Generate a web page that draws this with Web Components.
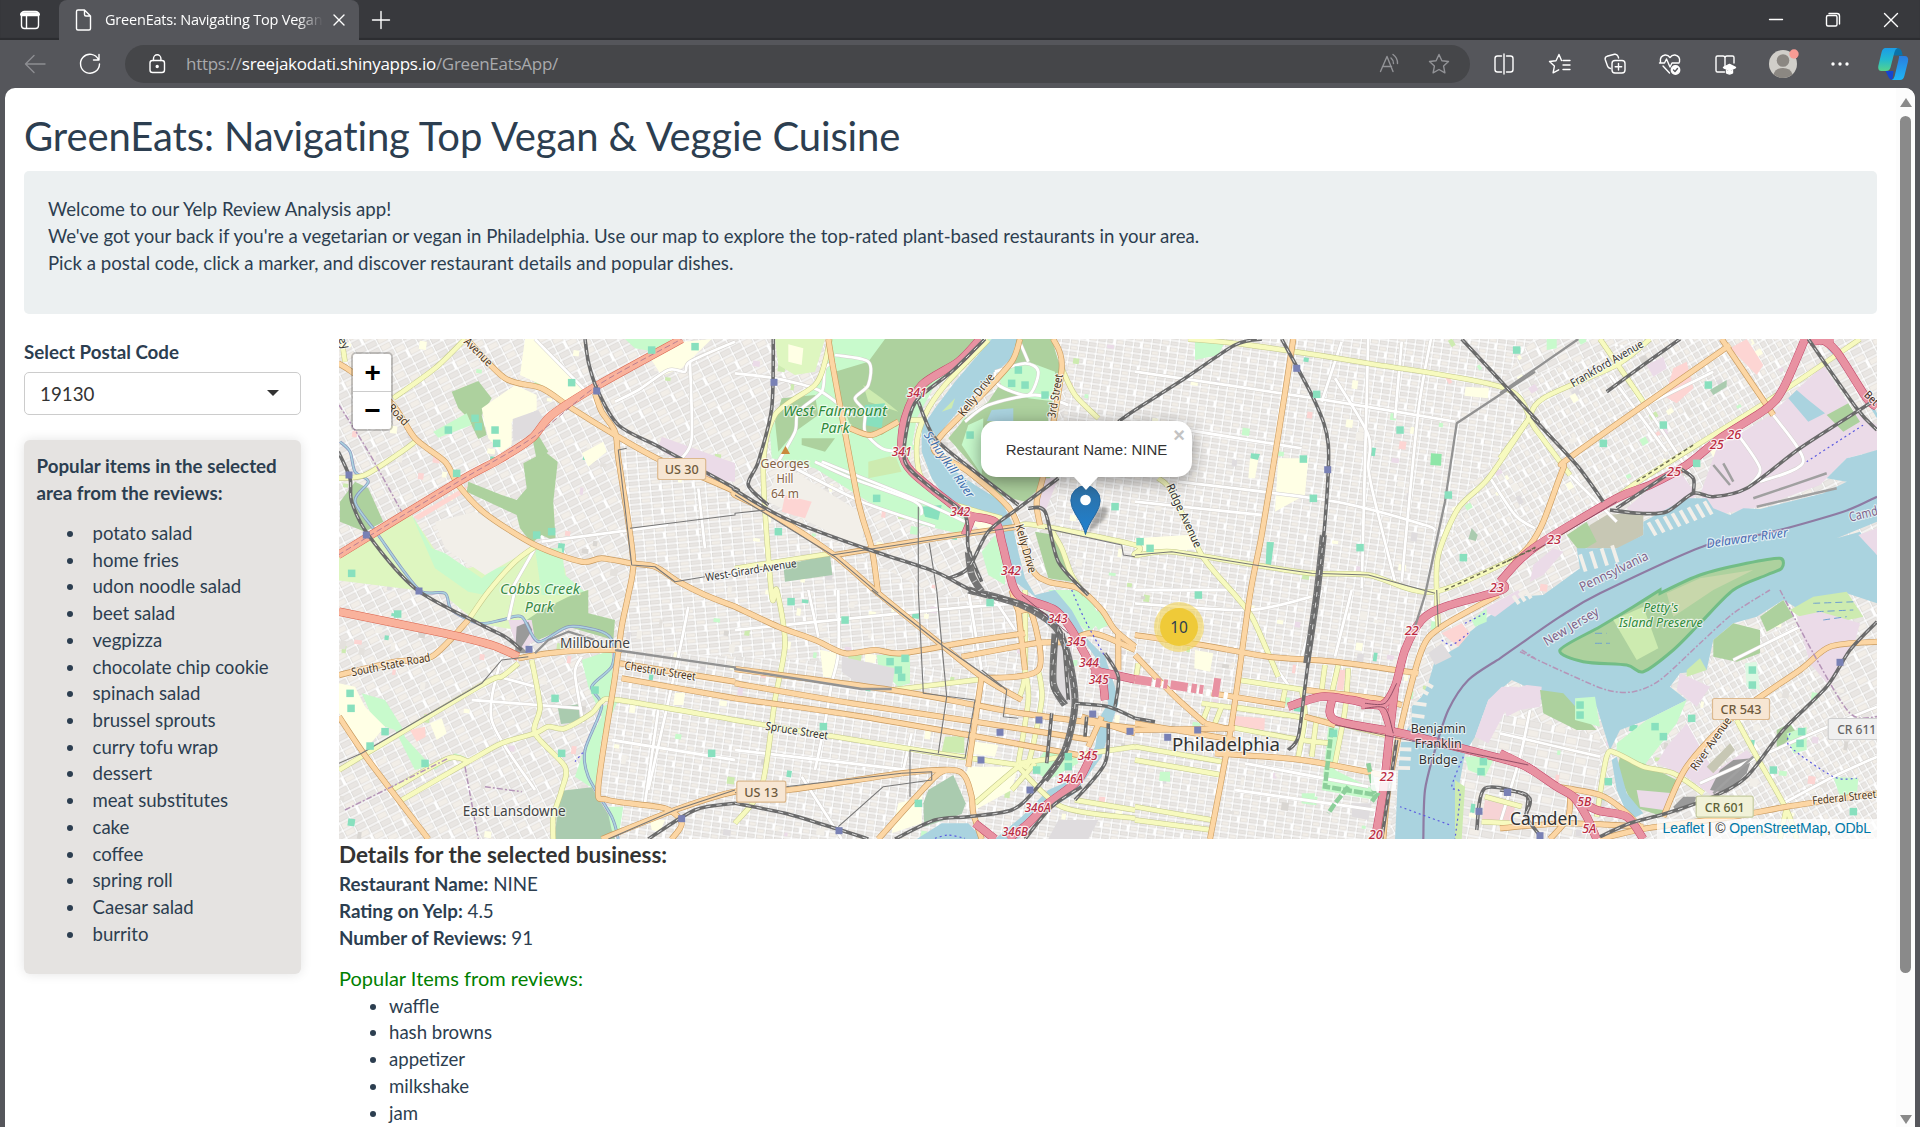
<!DOCTYPE html>
<html lang="en"><head><meta charset="utf-8"><title>GreenEats: Navigating Top Vegan &amp; Veggie Cuisine</title>
<style>
html,body{margin:0;height:1127px;overflow:hidden}
body{font:18.75px/26.79px Lato,"Noto Sans",sans-serif;color:#2c3e50;background:#55565b}
</style></head><body>
<browser-window>
  <greeneats-page></greeneats-page>
</browser-window>
<script>
const ICONS={
 workspace:'<rect x="5.5" y="5.5" width="17" height="17" rx="3"/><path d="M6 8.2h16" stroke-width="4"/><path d="M10.5 9v13"/>',
 file:'<path d="M7.500 5.500q0-1.500 1.500-1.500h6.500l6 6v12.500q0 1.500-1.500 1.500H9q-1.500 0-1.500-1.500zM15.500 4v4.500q0 1.500 1.500 1.500h4.500"/>',
 x:'<path d="M9 9l10 10M19 9L9 19"/>', plus:'<path d="M14 5.500v17M5.500 14h17"/>',
 min:'<path d="M7.500 13.500h13"/>',
 max:'<rect x="7.500" y="9.500" width="10.500" height="10.500" rx="1.500"/><path d="M10 7.500h8q2.500 0 2.500 2.500v8"/>',
 close:'<path d="M7.500 7.500l13 13M20.500 7.500l-13 13"/>',
 back:'<path d="M24 14H4.500M13 5.500L4.500 14l8.500 8.500" stroke="#8d8e92"/>',
 reload:'<path d="M22.500 9.500A9.500 9.500 0 1 0 23.500 14M23 4.500v5.500h-5.500"/>',
 lock:'<rect x="7" y="10.500" width="14.500" height="12" rx="2.500"/><path d="M10.500 10.500V8.500a3.700 3.700 0 0 1 7.400 0v2"/><circle cx="14.200" cy="16.500" r="1" fill="#fff"/>',
 read:'<g stroke="#929397"><path d="M5.500 21.500L12 6.500l6 15M7.500 16.500h9M16 8q2.500 2 2.500 5.500M18 4.500q4.800 3.500 4.500 9"/></g>',
 star:'<path stroke="#929397" d="M14 4.500l2.900 6.200 6.600.8-4.900 4.600 1.300 6.700-5.900-3.300-5.900 3.300 1.300-6.700-4.900-4.600 6.600-.8z"/>',
 split:'<path d="M11.500 6H7.500Q5 6 5 8.500v11Q5 22 7.500 22h4M16.500 6h4Q23 6 23 8.500v11q0 2.500-2.500 2.500h-4M14 4v20"/>',
 favs:'<path d="M15.500 10.500l-2.500-6-3 6.200-6.500.8 4.900 4.600-1.300 6.700 5.600-3M17 10.500h7M17 15h7M17 19.500h7"/>',
 coll:'<rect x="11" y="10.500" width="13" height="12.500" rx="3"/><path d="M17.500 13.500v6.500M14.200 16.800h6.500M9.500 18.500Q7 18 6.500 16L4.200 9.500Q3.700 7 6 6.300l7.500-2q2.500-.5 3.500 2l.6 1.700"/>',
 heart:'<path d="M4.500 12q-1-6 4.500-7 3-.3 5 2.500 2-2.800 5-2.500 5.500 1 4.500 7M3.500 13h5l2-4 3.500 8 2-4h7M7 16l6.500 7"/><circle cx="19.500" cy="20" r="4.200" fill="#fff"/><path d="M17.500 20l1.500 1.500 2.500-3" stroke="#55565b"/>',
 book:'<path d="M13.500 22H6.500Q5 22 5 20.500v-13Q5 6 6.500 6H12q2 0 2 2v10M14 8q0-2 2-2h5.500Q23 6 23 7.500V13"/><path d="M12.500 17.500l6-3 6 3-6 3z" fill="#fff"/><path d="M15.500 20.500v2.500q3 2 6 0v-2.500" fill="#fff"/>',
 avatar:'<g stroke="none"><circle cx="14" cy="14" r="14" fill="#d0cec9"/><circle cx="14" cy="10.500" r="6.300" fill="#8b8782"/><path d="M4.500 24.300q2-6.300 9.500-6.300t9.500 6.300A14 14 0 0 1 4.500 24.300" fill="#8b8782"/><circle cx="25" cy="4" r="4.700" fill="#f79b94"/></g>',
 dots:'<g fill="#fff" stroke="none"><circle cx="7" cy="14" r="1.700"/><circle cx="14" cy="14" r="1.700"/><circle cx="21" cy="14" r="1.700"/></g>',
 copilot:'<defs><linearGradient id="a" x1="0" y1="0" x2="0" y2="1"><stop stop-color="#1b9ce8"/><stop offset=".5" stop-color="#23b9cf"/><stop offset="1" stop-color="#55d38c"/></linearGradient><linearGradient id="b" x1="0" y1="0" x2="0" y2="1"><stop stop-color="#2a7de0"/><stop offset="1" stop-color="#1fb6f5"/></linearGradient></defs><g stroke="none"><path d="M13-2h5q3.500 0 4.500 3l1.300 4.500H15z" fill="#0b72a8"/><path d="M6.500 21h8l-1 9q-3.500-.5-4.500-4z" fill="#1546cf"/><path d="M6.500-2H18.500q-2 .5-3 4L11.500 17.500q-1 3.500-4.500 3.500H2.500q-4 0-3.200-5L2.500 2.500q1-4.500 4-4.500z" fill="url(#a)"/><path d="M20 6h5.500q4.500 0 3.500 5.500l-3.500 14q-1 4.500-4.500 4.500H12.500q2.300-.5 3.200-4L19.500 10q.7-3 .5-4z" fill="url(#b)"/></g>'
};
class UiIcon extends HTMLElement{constructor(){super();this.attachShadow({mode:'open'}).innerHTML=`<style>:host{display:block;width:28px;height:28px;flex:none}svg{display:block;overflow:visible}</style><svg width="28" height="28" viewBox="0 0 28 28" fill="none" stroke="#fff" stroke-width="1.4" stroke-linejoin="round" stroke-linecap="round">${ICONS[this.getAttribute('name')]}</svg>`}}
customElements.define('ui-icon',UiIcon);

class BrowserWindow extends HTMLElement{constructor(){super();this.attachShadow({mode:'open'}).innerHTML=`<style>
:host{display:flex;flex-direction:column;height:1127px;font-family:"Open Sans","Noto Sans",sans-serif;color:#fff}
.strip{height:40px;display:flex;align-items:center;background:#38393d;box-shadow:inset 0 -2px 1px #2c2d30}
.tab{margin-left:15px;width:300px;height:40px;background:#55565b;border-radius:8px 8px 0 0;display:flex;align-items:center}
.tab ui-icon:first-child{margin-left:10px}
.t{width:218px;overflow:hidden;white-space:nowrap;font-size:14.5px;letter-spacing:-.2px;margin-left:8px;-webkit-mask:linear-gradient(90deg,#000 88%,transparent)}
.bar{height:48px;display:flex;align-items:center;background:#55565b;box-sizing:border-box;padding:0 0 0 21px}
.addr{margin:0 0 0 21px;width:1345px;height:38px;border-radius:19px;background:#454649;display:flex;align-items:center;flex:none;box-sizing:border-box;padding:0 17px 0 18px}
.url{margin-left:15px;flex:1;font-size:17px;letter-spacing:-.27px;color:#a9aaad;white-space:nowrap}.url b{font-weight:400;color:#fff}
.ic{display:flex;gap:27px;margin-left:20px}
.view{flex:1;min-height:0;margin:0 5px;background:#fff;border-radius:10px 10px 0 0;display:flex;overflow:hidden}
.page{flex:1;min-width:0}
.sb{width:19px;background:#fcfcfc;display:flex;flex-direction:column;align-items:center;padding-top:10px;box-sizing:border-box}
.up,.dn{border:6px solid transparent;border-top:0;border-bottom:9px solid #8a8a8a}
.thumb{width:11px;height:857px;border-radius:6px;background:#8a8a8a;margin:9px 0 142px}
.dn{border-bottom:0;border-top:9px solid #8a8a8a}
</style>
<div class="strip"><ui-icon name="workspace" style="margin-left:16px"></ui-icon>
<div class="tab"><ui-icon name="file"></ui-icon><div class="t">GreenEats: Navigating Top Vegan</div><ui-icon name="x" style="margin-left:2px"></ui-icon></div>
<ui-icon name="plus" style="margin-left:8px"></ui-icon><ui-icon name="min" style="margin-left:auto"></ui-icon><ui-icon name="max" style="margin-left:29px"></ui-icon><ui-icon name="close" style="margin:0 15px 0 30px"></ui-icon></div>
<div class="bar"><ui-icon name="back"></ui-icon><ui-icon name="reload" style="margin-left:27px"></ui-icon>
<div class="addr"><ui-icon name="lock"></ui-icon><div class="url">https://<b>sreejakodati.shinyapps.io</b>/GreenEatsApp/</div><ui-icon name="read"></ui-icon><ui-icon name="star" style="margin-left:22px"></ui-icon></div>
<div class="ic"><ui-icon name="split"></ui-icon><ui-icon name="favs" style="margin-left:1px"></ui-icon><ui-icon name="coll"></ui-icon><ui-icon name="heart"></ui-icon><ui-icon name="book"></ui-icon><ui-icon name="avatar" style="margin-left:3px"></ui-icon><ui-icon name="dots" style="margin-left:2px"></ui-icon><ui-icon name="copilot" style="margin-left:-2px"></ui-icon></div></div>
<div class="view"><div class="page"><slot></slot></div><div class="sb"><div class="up"></div><div class="thumb"></div><div class="dn"></div></div></div>`}}
customElements.define('browser-window',BrowserWindow);

/* Map geometry: a letter picks the survey sheet, then x,y pairs in thirds of a pixel from its corner. */
const SHEET={A:[335,335],B:[735,335],C:[1135,335],D:[1500,335],E:[335,590],F:[735,590],G:[1135,590],H:[1500,590]};
function pts(s){let o=SHEET.A;const r=[];for(const t of s.trim().split(/\s+/)){if(SHEET[t])o=SHEET[t];else{const[x,y]=t.split(',').map(Number);r.push([o[0]+x/3,o[1]+y/3])}}return r}
const f1=n=>n.toFixed(1);
const poly=s=>'M'+pts(s).map(p=>f1(p[0])+' '+f1(p[1])).join('L');
function curve(s){const p=pts(s);let d='M'+f1(p[0][0])+' '+f1(p[0][1]);for(let i=0;i<p.length-1;i++){const a=p[i-1]||p[i],b=p[i],c=p[i+1],e=p[i+2]||c,k=7;d+=`C${f1(b[0]+(c[0]-a[0])/k)} ${f1(b[1]+(c[1]-a[1])/k)} ${f1(c[0]-(e[0]-b[0])/k)} ${f1(c[1]-(e[1]-b[1])/k)} ${f1(c[0])} ${f1(c[1])}`}return d}
const GRIDS=[
['g8','E 840,180 F 740,240 900,130 G 0,0 C 0,0 C 1200,0 D 0,150 C 900,780 G 860,200 760,747 F 0,747 E 780,747'],
['g8','C 0,0 980,0 1200,250 960,500 900,780 G 800,300 G 0,400 B 1060,780 960,560 1000,100 960,0'],
['g3','A 840,290 1200,460 B 600,780 F 860,40 900,130 740,240 E 840,180 A 895,690'],
['g30','C 1200,120 D 450,0 900,0 820,220 560,390 310,500 60,680 C 905,780 910,660 1170,270'],
['g30','H 640,200 890,100 1050,370 1131,400 1131,747 600,747 640,620 500,520'],
['g12','G 1060,360 H 300,440 290,747 G 960,747 980,500']
];
const AREAS=[
['#def6c0','A 0,650 130,590 230,540 330,690 400,700 600,640 690,700 700,780 E 760,0 600,130 430,100 320,10 0,-30'],
['#c8facc','A 230,540 290,640 330,655 440,730 480,700 530,690 450,780 400,770 300,700'],['#c8facc','A 600,640 680,640 690,720 760,780 620,780'],
['#f2efe9','A 420,530 540,590 600,635 520,680 450,720 330,640 300,560'],
['#add19e','A 15,500 60,440 100,460 145,560 90,590 15,560'],
['#add19e','A 395,470 400,440 500,480 545,495 575,460 565,385 630,350 668,380 655,500 662,620 620,600 590,625 555,580 545,540 480,510'],
['#add19e','A 350,170 430,138 470,190 440,240 455,300 430,312 400,250 370,220'],['#add19e','A 590,300 610,300 640,350 605,375'],
['#c8facc','A 295,290 395,235 410,270 310,308'],
['#ffffe5','A 440,220 540,150 605,180 605,225 530,260 530,330 500,352 460,310 450,270'],['#dfdcde','A 533,252 610,225 632,262 590,300 535,320'],
['#ffffe5','A 570,12 605,12 750,165 690,200 620,150 555,120'],['#ebdbe8','A 980,305 1200,385 1200,440 1100,430 970,340'],
['#ffd6d1','A 235,545 400,450 385,475 250,555'],['#ffffe5','A 740,355 805,320 815,350 760,395'],['#c8facc','A 870,12 1010,12 960,50 900,40'],['#ffffe5','A 940,60 1000,25 1130,12 1040,100 980,122'],
['#add19e','E 560,100 620,60 700,20 760,0 760,70 840,90 835,150 700,110 610,150'],['#ebdbe8','E 520,90 590,90 600,150 550,190'],['#9a9a9a','E 545,110 580,95 592,120 560,170 580,190 540,190'],
['#c8facc','E 740,210 830,180 835,300 800,350 850,330 800,440 780,600 E 720,560 750,470 800,380 760,290'],
['#aacbaf','E 668,352 730,343 736,395 678,402'],['#aacbaf','E 680,602 770,592 830,690 840,747 660,747 665,680'],
['#c8facc','E 80,310 150,330 200,410 240,540 180,420 120,400'],['#c8facc','E 190,420 300,540 360,490 390,500 240,540'],['#ffffe5','E 12,280 60,290 90,350 150,410 90,480 12,370'],['#ffffe5','E 285,400 320,385 335,430 305,450'],['#ffd6d1','E 225,420 270,410 272,440 245,455'],['#ffffe5','E 1020,308 1050,308 1045,345 1015,345'],['#ffffe5','E 945,690 990,690 975,725 950,720'],['#c8facc','E 815,650 865,650 850,747 830,720'],
['#def6c0','B 120,12 270,12 240,110 180,120 130,90'],['#ffffe5','B 160,28 205,40 200,90 160,80'],
['#c8facc','B 290,12 770,12 600,150 545,250 520,400 640,500 705,560 690,600 560,570 400,500 240,400 180,385 110,370 105,290 130,240 240,160'],
['#add19e','B 400,80 450,12 720,12 640,100 550,180 510,250 440,300 350,280 310,180 300,110'],['#add19e','B 140,190 240,180 250,240 180,290 130,350 120,260'],['#add19e','B 200,310 300,310 270,350 200,330'],['#cdebb0','B 385,150 440,190 490,230 400,200'],['#cdebb0','B 400,380 480,360 500,410 400,430'],
['#88e0be','B 390,210 450,205 440,280 390,270'],['#88e0be','B 560,515 620,510 610,555 570,545'],
['#f2efe9','B 130,380 390,540 380,640 100,500'],['#fdd5d3','B 150,480 230,500 210,550 140,530'],
['#add19e','B 840,12 950,12 980,110 940,240 945,430 870,500 790,480 720,400 640,310 690,250 760,200 840,80'],['#c8facc','B 790,110 880,80 960,110 965,200 880,190 800,160'],['#c8facc','B 700,270 745,250 740,420 680,330'],['#aad3df','B 770,225 835,220 835,258 755,258'],['#add19e','B 900,590 960,600 1010,740 940,730'],['#c8facc','B 740,650 780,600 810,680 810,750 760,720'],
['#ebdbe8','B 920,430 970,430 930,530 900,520'],['#aacbaf','B 145,690 285,660 292,720 150,740'],['#ffffe5','B 700,560 780,560 760,600'],
['#ffffe5','C 0,610 160,600 200,640 100,650 0,660'],['#ffffe5','C 430,370 520,370 510,480 420,530'],['#ffffe5','C 992,155 1062,160 1058,190 988,182'],['#c8facc','C 180,15 270,20 250,60 180,75'],['#aacbaf','C 1010,580 1028,600 1022,618 1000,612'],['#88e0be','C 348,355 375,357 365,385 345,383'],['#88e0be','C 395,620 417,622 408,690 392,688'],['#8fe6a8','C 888,355 920,357 918,392 886,390'],['#ffffe5','C 345,370 370,375 360,430 340,430'],
['#ffffe5','F 255,180 310,190 300,265 265,260'],['#cdebb0','F 340,195 380,195 375,230 340,230'],['#ffffe5','F 390,190 425,195 420,220 390,215'],['#c8facc','F 425,195 525,195 525,280 490,290 430,230'],['#dfdcde','F 320,200 480,235 470,295 380,290 320,245'],['#cdebb0','F 630,440 688,438 688,490 620,485'],
['#ffffe5','F 720,455 790,465 780,500 700,490'],['#ffffe5','F 700,530 850,530 830,600 720,660 690,560'],['#aacbaf','F 580,600 655,555 692,640 680,672 568,710 565,640'],['#ffffe5','F 490,640 560,620 560,700 470,730'],['#aad3df','F 545,747 620,700 700,700 745,747'],['#c8facc','F 930,480 1020,490 1030,520 940,570 890,540'],['#c8facc','F 1060,70 1110,60 1130,100 1090,120'],['#dfdcde','F 970,690 1090,690 1060,747 940,747'],['#dfdcde','F 950,120 1010,160 1020,340 960,330'],['#c8facc','F 940,0 1050,0 1100,90 1060,130 1020,90'],
['#c8facc','G 580,410 610,415 600,540 720,600 720,630 560,600'],['#fdd5d3','G 300,378 390,385 388,420 296,410'],['#ffffe5','G 180,180 235,190 225,245 178,235'],['#fdd5d3','G 612,240 632,240 625,300 605,300'],['#c8facc','G 75,545 105,545 105,575 72,572'],['#c8facc','G 500,610 540,610 535,645 500,640'],['#dfdcde','G 650,640 710,640 700,690 650,680'],
['#c7c7b4','D 320,540 430,530 430,600 360,640 230,640 270,570'],['#add19e','D 200,600 260,560 290,620 240,650'],['#ebdbe8','D 100,690 160,640 190,650 130,720 90,740'],
['#ebdbe8','D 380,520 470,440 540,410 590,480 520,540 400,535'],['#ebdbe8','D 650,340 810,240 970,90 1060,230 1131,270 1131,345 1040,370 960,450 780,515 650,540 600,480'],['#aad3df','D 865,190 890,165 925,195 975,235 925,260'],['#fdd5d3','D 690,40 740,12 790,90 770,120'],['#fdd5d3','D 520,100 560,80 580,160 530,205 495,185'],['#ebdbe8','D 440,90 490,65 500,100 460,125'],['#add19e','D 980,240 1045,205 1080,260 1030,290'],['#c8facc','D 140,12 170,12 170,40 140,45'],['#aacbaf','D 630,165 680,135 680,155 640,180'],['#aad3df','D 980,40 1000,60 1100,200 1131,250 1131,235 1110,190 1010,50']
];
const LATE=[
['#aad3df','B 770,12 845,12 830,70 740,150 660,240 610,300 600,340 620,380 720,450 800,500 830,560 850,650 870,730 900,780 F 960,0 1010,60 1060,150 1110,200 1140,290 1150,340 1130,400 1100,500 1020,610 940,660 850,747 780,747 860,680 940,600 1030,560 1080,470 1095,380 1120,340 1080,200 1030,130 980,90 900,20 B 840,740 800,600 760,540 640,500 590,430 560,350 560,280 600,220 660,140'],
['#cdebb0','B 620,230 660,190 650,220'],
['#aad3df','D 1131,345 1080,360 1040,370 980,430 1040,440 970,475 780,522 730,520 690,540 640,520 620,490 560,490 430,560 430,600 350,640 230,640 240,700 130,780 G 1150,20 1060,80 1000,130 970,170 900,210 880,280 860,320 830,350 830,400 800,440 790,540 780,747 960,747 970,600 990,490 1020,440 1060,330 1130,270 H 80,290 170,370 290,350 330,480 360,420 440,390 560,330 510,290 540,250 620,240 640,150 700,100 770,80 850,30 900,60 1040,10 1131,40 D 1131,660 1080,590 1010,610 1131,560'],
['#ebdbe8','D 1075,600 1131,580 1131,660'],
['#cdebb0','H 870,60 940,20 1040,5 1090,80 1000,100 900,80'],['#add19e','H 780,80 850,30 880,80 800,125'],['#ebdbe8','H 890,80 960,65 1080,100 1060,170 990,290 930,220'],['#add19e','H 640,150 700,100 780,120 780,190 710,215 640,200'],['#ebdbe8','H 540,250 630,290 590,350 530,300'],['#cdebb0','H 560,240 600,205 620,240 560,260'],
['#c8facc','H 350,460 440,390 560,330 530,400 430,530 350,490'],['#add19e','H 360,500 430,520 530,570 490,680 400,650 350,540'],['#ebdbe8','H 500,470 560,400 650,560 640,620 560,560 470,520'],['#ebdbe8','H 410,600 520,610 490,660 420,650'],['#ebdbe8','H 620,560 740,480 760,500 640,620'],['#aad3df','H 335,510 350,500 380,610 430,670 390,690 350,600'],
['#c7c7b4','H 620,530 690,460 705,480 640,550'],['#9a9a9a','H 630,600 660,540 700,510 755,505 740,550 680,610'],['#9a9a9a','H 520,650 550,620 590,620 580,645 530,670'],['#add19e','H 830,420 870,400 890,430 830,480'],
['#ebdbe8','H 0,310 20,380 60,360 120,350 125,290 80,285'],['#add19e','H 120,300 190,310 290,420 230,420 130,370'],['#c8facc','H 225,325 285,320 300,410 225,390'],
['#ebdbe8','G 1040,60 1150,0 1160,20 1080,80'],['#fdd5d3','G 920,130 980,100 1005,130 970,170'],['#c8facc','G 1010,90 1055,55 1055,95 1020,110'],['#ebdbe8','G 1020,440 1060,330 1100,290 1150,290 1060,460'],['#dfdcde','G 880,190 920,160 950,200 900,225'],['#f6d3d5','G 1050,630 1140,650 1130,695 1040,690'],['#c8facc','G 990,500 1080,500 1050,560 1000,540'],['#cdebb0','G 960,570 990,590 980,747 960,747'],
['#c8facc','H 860,430 920,410 920,480 880,490'],['#c8facc','H 1000,560 1075,565 1070,620 1020,620'],['#ddf8e3','H 735,220 770,215 780,300 740,290']
];
const ROADS={
ter:['A 750,165 600,12','A 1200,20 1065,80 1050,110 1000,105 910,165 840,200','A 620,620 1000,570','A 1065,80 1070,310 1040,370','A 520,780 600,640','B 300,80 270,100 260,170 190,230 180,290 130,380','B 0,115 120,130 250,165 350,240','B 300,60 400,80 400,150 360,190 390,230 390,290 440,340 490,350','B 240,380 350,430 540,500 560,540','B 180,400 380,500 600,575','B 260,380 560,500 690,560','B 690,260 760,210 900,180 1000,210','B 780,110 870,85 910,110 880,180 790,150 780,110','B 850,12 880,80','C 600,130 700,300 700,400 720,500 780,740','C 0,110 540,190 960,260','C 0,260 500,340','C 130,440 600,500 870,570 900,590','C 890,0 850,230 800,740','C 1060,420 1140,540 1200,580','D 430,200 580,430','D 190,400 350,560','E 500,200 470,390 600,600','E 490,260 600,290','E 410,330 740,355','E 740,200 720,250 745,400','F 310,0 310,190 290,280 270,400 240,540','F 200,560 320,747','G 300,0 0,0','G 0,40 340,60 530,20','G 400,200 470,300','H 0,430 300,500','H 90,360 60,500 0,700','H 1131,500 1000,560 850,640','H 600,580 890,450 1131,350','H 700,210 900,110','F 530,430 500,560','C 700,0 680,760','C 800,20 780,250','G 650,0 600,200','G 560,0 500,200','D 820,240 910,380 780,440','D 700,280 780,400 740,460','F 0,120 600,60 850,40','F 220,0 250,140','F 700,0 740,240','E 1060,50 1030,200 940,600','E 970,360 930,640','E 830,450 1200,510','E 540,0 520,90','A 1090,460 1110,640','C 0,500 380,540','C 620,20 560,200','D 380,240 640,110','D 500,350 330,120','G 330,520 700,590','G 300,600 720,660','F 0,480 520,540','F 760,0 840,120'],
sec:['A 175,190 300,100 390,12','A 10,430 90,420 200,350 240,320','A 20,12 30,80','A 600,635 540,680 460,770 E 400,90','E 12,540 440,285 500,260 550,220','E 170,600 340,505 400,515','E 200,630 400,515 500,460 600,430 640,410 690,415 770,370 800,335 850,330 1200,390 F 0,390 300,440 640,495 850,525','E 590,210 615,350 600,430 690,530 680,600 655,680 655,747','B 285,12 270,80 240,150 120,240 85,400 110,780 F 125,0 150,160 120,330 80,590 0,700','B 0,700 290,655','B 560,255 500,255','B 760,15 630,150 570,240 545,330 560,430 640,500 800,550','B 850,575 900,570 1200,630 C 0,660 110,650 360,690 530,715 700,720 900,770 1200,640','B 980,100 1020,180 1090,250','B 940,570 980,640 1010,720 1050,780','C 70,430 110,470 200,660 300,780 G 350,80 400,190 430,260','C 160,12 340,30 700,85 1110,160 1200,280 D 210,420','C 1175,260 1060,430 970,520 910,660 905,780 G 910,110','D 450,12 350,90 130,190 80,260 0,370','D 300,12 430,200','D 1080,12 800,200 430,430 330,500 60,670','F 470,300 740,268','F 850,330 870,250 870,0','F 870,240 880,330 850,520','F 910,240 920,330 880,520 850,530 720,640','F 850,530 980,650 1200,685','F 850,520 1200,470','F 830,600 900,520','F 1020,630 1200,660','G 310,270 510,300','G 290,350 580,395 750,435','G 200,340 450,375','G 280,410 500,450 590,460','G 0,470 260,515','G 0,510 260,555','G 0,650 230,690','G 0,690 230,720','G 450,300 440,350','G 545,380 530,500','G 500,300 510,380 490,500','G 610,225 590,310','G 570,225 560,300','G 640,235 630,360 600,520','G 220,350 200,400','G 260,350 240,400','G 10,220 0,280','H 290,680 320,500 350,490 430,530 520,550 610,610','H 710,390 770,500 860,660 890,747','H 860,650 840,747','G 1050,620 1160,650','G 1040,695 1130,700'],
prim:['A 395,12 510,130 620,160 710,220 840,300 965,370 1110,430 1200,470 B 0,480 100,530 290,655 430,775 F 620,165 740,260 860,330','A 10,85 50,110 170,205 240,310 330,380 370,450 450,535 600,630 740,680 800,670 890,685 960,695 1030,740 1110,780 E 1200,50 F 0,50 130,110 240,150 330,190 420,180 500,190 700,155 870,130','A 780,175 800,230 840,290 850,370 880,560 895,690 880,780 E 860,110 840,260 790,590 820,630 990,655 1040,700 1010,747','E 12,255 180,215 290,200 400,90','E 550,205 640,190 760,180 860,180','E 12,380 100,510 280,747','E 855,220 1200,275','E 860,265 1200,325','E 800,747 1020,660 1200,605 F 160,600 500,550 650,540 690,560 710,620 715,670 740,747','F 0,237 470,300 720,345 860,370 1200,415','F 0,280 350,340 720,395 1070,450','F 0,325 350,375 700,435 1030,495','F 740,260 700,530','F 430,747 600,560 650,540','F 680,200 900,160 990,155 1060,130 1110,140 1200,180','F 740,265 910,240 890,70 850,60 830,0','F 870,240 850,60','B 280,12 300,130 370,500 410,640 430,780','B 300,660 600,610 850,575','B 345,280 410,300 490,260','B 855,12 830,80 740,180 620,300 600,350 700,410 830,530 890,700 940,740 1030,760 F 1100,60 1140,120 1200,170','B 955,12 980,100 930,400 905,500 915,570','C 475,12 430,300 380,600 345,780 G 290,400 225,747','D 690,30 220,360 190,400 130,560 90,630 40,680','D 665,12 820,240','G 1090,15 920,110 860,180 800,400 760,600 745,747','G 0,135 200,165 400,200 600,215 850,250','G 0,195 120,320 210,400','G 0,400 300,450','G 0,420 300,415','G 230,310 450,345','G 240,490 500,510 770,560','G 510,300 720,325 800,345','G 510,380 600,405','G 210,400 290,420','F 1150,130 1150,240','F 1100,380 1060,470','F 1040,380 1200,430','H 490,680 560,530 700,380 900,240 990,170 1131,155','H 1131,610 860,650 700,680 440,715 300,747','H 170,590 300,615 370,660 420,710','H 0,715 200,700 430,710','H 210,590 205,680 150,747'],
trunk:['A 10,660 370,440 490,375 590,310 650,240 790,150 1040,12','E 12,65 330,130 470,165 550,200'],
mw:['B 735,12 670,80 560,150 510,250 500,350 530,410 640,500 700,540 780,560 800,620 820,700 850,780 F 960,60 1010,120 1060,210 1100,260 1110,330','F 1070,240 1200,268','F 1075,480 1030,570 940,640 880,700 820,747','F 720,700 780,747','B 690,600 710,550','D 915,12 850,160 800,220 660,310 560,390 450,450 350,490 100,640 0,740','D 0,740 G 1100,0 930,50 860,90 810,180 780,290 740,345 650,330 560,320 460,350','G 780,290 765,420 745,600 720,747','G 680,345 740,350 770,430','D 900,12 960,12 1010,50 1100,190 1131,215','D 930,20 1000,12','G 590,330 600,390 800,430 1000,480 1150,520 1200,545','H 0,490 80,530 170,590 220,620 260,680 290,747','H 220,620 290,660 380,680 430,747']
};
const STY={ter:['#d3d0cc',3.7,'#fff',2.8],sec:['#c3c88a',5.4,'#f7fabf',4.4],prim:['#c99a5e',6,'#fcd6a4',4.8],trunk:['#d9624c',8.4,'#f9b29c',7.4],mw:['#c24668',8.4,'#e892a2',7.4]};
const RAIL=['A 10,350 45,430 50,500 100,600 240,760 E 430,100 510,140 560,180','A 750,12 760,80 785,160 850,270 980,340 1200,460 B 0,465 150,550 390,640 600,710 720,770 F 860,40 960,100 1000,200 1020,340 990,480 900,600 830,660 700,680 600,690 480,747','B 115,12 110,220 70,380 40,450 100,510','B 750,12 650,110 550,190 520,260 510,380 590,460 690,540 700,640 740,740','B 550,200 600,310 720,410 850,510','B 970,430 850,520 760,590 700,700 640,730','C 380,12 300,30 150,130 0,225 B 1150,260','C 440,12 540,200 580,330 570,560 545,780 G 510,290 490,440 460,480','C 980,12 1200,250 D 100,250 230,390 310,500','B 880,520 930,530 970,680 1060,780','D 925,12 1070,220 1131,285','D 1110,205 900,340 740,460 640,485 580,475 500,530 420,535 330,525','D 540,400 580,430 580,475','D 540,12 430,90 320,170','D 350,520 500,420','F 970,110 950,280 990,340','F 985,130 1000,330','F 1020,340 1120,350 1200,385','F 1110,190 1150,260 1140,350','F 1020,630 1110,520 1120,400','F 0,640 150,670 300,715 400,747','E 940,747 1080,660 1200,640','F 950,370 935,520','F 1055,380 1050,440','H 1131,95 1050,180 980,290 850,420 740,560 640,620 500,670 390,700 300,740','H 0,600 80,615 80,680 120,737','G 1025,720 1050,595 1180,620 1170,680','G 785,450 740,747','F 870,747 950,650 1040,590','G 0,385 60,395'];
const WIDE=['C 565,600 545,780 G 515,220','F 700,0 860,45 960,110 1000,200 1020,340 990,480 930,570','F 960,130 955,280 990,345','B 700,650 710,720 740,770'];
const SIDING=['D 640,390 690,450','D 670,385 700,440','D 760,490 980,415','D 770,515 1010,460','H 640,610 760,500'];
const SUB=['A 875,340 850,345 890,690 960,695 1020,740 1110,725','A 885,580 1200,540 B 0,535 90,525','F 550,-250 550,0 565,310 720,330 690,505 525,480 525,620','F 583,-140 605,0 635,320 610,490','F 740,240 815,300 805,380 850,385','F 500,550 590,545 590,570 445,590 310,710','F 410,0 620,165 800,290','B 290,660 850,575','B 0,480 300,665 430,775','E 0,525 80,490 440,280 500,210 580,200','E 820,747 1020,660 1200,600','C 0,660 110,650 360,690 530,715 700,720 900,775','B 930,580 1160,630 1165,660 1200,665','F 0,608 500,550','G 910,110 905,0'];
const THICK=['C 1200,110 965,265 930,500 870,780 G 840,110','D 0,175 235,12','E 600,190 640,150 700,125 780,150','E 840,180 1200,232 F 0,237 380,297 470,297'];
const BND=['D 1131,485 1030,530 800,595 620,630 300,775 H 180,80 50,170 0,205 G 1000,270 940,360 900,480 870,600 865,747'];
const BND2=['H 60,185 200,250 320,300 400,305 480,270 600,160 700,70 810,0','G 1160,180 1200,205','H 840,0 940,190 1050,370 1131,380','A 12,210 100,350 200,530','E 390,530 430,747','E 30,660 340,505','E 450,590 560,605'];
const CREEK=['A 15,320 45,350 60,410 100,440 60,500 130,600 200,700 260,770 E 330,10 350,60 430,100 500,90 560,80 610,155 700,110 800,125 835,160 830,230 770,290 800,350 750,480 760,560 830,680 850,747'];
const STN='A 785,168 42,420 94,600 252,768 E 582,178 1040,686 B 117,142 C 485,100 578,404 F 312,722 885,600 912,390 738,510 795,427 1073,372 1185,424 G 188,420 98,442 1118,607 1032,664 H 1020,217 22,607 120,737';
const PITCH='A 420,250 480,285 430,275 485,325 710,143 605,600 650,590 340,285 50,715 1080,35 950,45 365,415 B 130,590 425,490 1140,515 850,105 830,145 870,150 930,180 705,300 C 545,178 535,490 675,638 15,620 45,640 795,285 985,668 505,372 940,480 D 310,325 625,150 490,270 590,385 50,45 E 188,72 660,325 150,425 105,468 48,355 45,310 780,300 270,520 680,490 1130,490 F 465,215 510,205 490,240 500,262 330,90 168,35 265,410 765,38 550,640 1000,500 1000,530 905,540 G 595,430 1038,545 1045,515 190,15 H 465,410 490,440 575,385 240,345 240,375 757,240 757,285 325,575 905,425 900,460 1060,665 820,540';
/* sheet,x,y,text,width,size,colour,rotation,class */
const TXT=[
['B',300,243,'West Fairmount',104,14,'#2f8a3c',0,'i'],['B',300,295,'Park',29,14,'#2f8a3c',0,'i'],['B',150,400,'Georges',49,12.5,'#846146'],['B',150,443,'Hill',17,12.500,'#846146'],['B',150,488,'64 m',28,12.500,'#846146'],
['A',615,778,'Cobbs Creek',80,14,'#3b8a49',0,'i'],['E',613,66,'Park',29,14,'#3b8a49',0,'i'],['E',780,173,'Millbourne',70,14,'#444'],['E',538,678,'East Lansdowne',103,13.5,'#444'],['G',273,483,'Philadelphia',108,18.5,'#333'],['H',132,706,'Camden',68,17.5,'#333'],
['G',910,430,'Benjamin',55,13,'#333'],['G',910,474,'Franklin',47,13,'#333'],['G',910,521,'Bridge',39,13,'#333'],
['H',482,67,"Petty's",35,12.5,'#2f8a3c',0,'i'],['H',482,112,'Island Preserve',84,12.5,'#2f8a3c',0,'i'],
['A',428,62,'Avenue',35,11.5,'#4a3520',45],['A',188,250,'Road',25,11.5,'#4a3520',47],['B',726,190,'Kelly Drive',51,11.5,'#4a3520',-52],['B',963,192,'3rd Street',44,11.5,'#4a3520',-80],['B',870,650,'Kelly Drive',50,11.5,'#4a3520',74],['B',640,400,'Schuylkill River',78,12,'#3d6fae',55,'i'],
['A',1248,717,'West-Girard-Avenue',92,11,'#333',-9],['C',145,552,'Ridge Avenue',69,11.5,'#333',65],
['D',322,97,'Frankford Avenue',82,11.5,'#333',-30],['D',742,622,'Delaware River',82,12.5,'#4a70b5',-8,'i'],['D',343,722,'Pennsylvania',75,13,'#7e6389',-26],['H',215,122,'New Jersey',62,13,'#7e6389',-31],['D',1091,550,'Camd',29,13,'#7e6389',-14],
['E',168,236,'South State Road',80,11.5,'#4a3520',-11],['E',975,255,'Chestnut Street',72,11.5,'#4a3520',9],['F',185,434,'Spruce Street',63,11.5,'#333',9],['H',635,472,'River Avenue',62,11.5,'#4a3520',-55],['H',1033,634,'Federal Street',64,11.5,'#4a3520',-6],['D',1113,200,'Bet',15,11,'#321',45],['A',25,34,'ey',12,11,'#333',60],
...[['B',545,187,'341'],['B',500,363,'341'],['B',676,543,'342'],['B',828,720,'342'],['F',968,98,'343'],['F',1024,168,'345'],['F',1062,232,'344'],['F',1091,282,'345'],['F',1058,510,'345'],['F',1006,578,'346A',26],['F',908,667,'346A',26],['F',840,737,'346B',26],['G',830,136,'22',14],['G',755,573,'22',14],['G',722,748,'20',14],['D',162,627,'23',14],['C',1085,770,'23',14],['D',522,424,'25',14],['D',650,341,'25',14],['D',703,311,'26',14],['H',253,649,'5B',14],['H',268,728,'5A',14]].map(t=>[t[0],t[1],t[2],t[3],t[4]||20,12.5,'#bb2b42',0,'n'])];
const SHIELDS=[['A',1040,402,'US 30',48,'#f7e6d3','#dcb98f','#6e5a3c',34],['F',79,605,'US 13',49,'#f7e6d3','#dcb98f','#6e5a3c',34],['H',723,357,'CR 543',57,'#f7e6d3','#dcb98f','#6e5a3c',41],['H',674,650,'CR 601',57,'#f1f2d8','#c5cba0','#5c6136',40],['H',1070,417,'CR 611',57,'#f0f0f0','#cfcfcf','#666',39]];
class CityMap extends HTMLElement{constructor(){super();
 const g=(id,r,w,h)=>`<pattern id="${id}" width="${w*3}" height="${h*4}" patternUnits="userSpaceOnUse" patternTransform="rotate(${r})"><rect width="99" height="99" fill="#fff"/>${[0,1,2].map(i=>[0,1,2,3].map(j=>`<rect x="${i*w+1.2}" y="${j*h+1}" width="${w-2-(i==1&&j==2?2:0)}" height="${h-2}" fill="${(i*2+j)%3?'#e9e6e3':'#f2eee8'}" stroke="#cfcdca" stroke-width=".5"/>`).join('')).join('')}</pattern>`;
 const st=(l,c,w,x='',fn=curve)=>l.map(s=>`<path d="${fn(s)}" fill="none" stroke="${c}" stroke-width="${w}" ${x}/>`).join('');
 let seed=7;const R=()=>(seed=(seed*16807)%2147483647)/2147483647;
 let scat='';const cols=['#ffffe5','#fdd5d3','#c8facc','#ffffe5','#ebdbe8','#d9d6d2','#cdebb0','#f2efe9','#f2efe9','#e4e1dd','#dfdcde','#f2efe9','#88e0be'];
 for(let i=0;i<520;i++){const x=340+R()*1530,y=340+R()*495;scat+=`<rect x="${f1(x)}" y="${f1(y)}" width="${f1(3+R()*5)}" height="${f1(3+R()*6)}" fill="${cols[R()*13|0]}" transform="rotate(${x>1440&&y<560?-30:8} ${f1(x)} ${f1(y)})"/>`}
 const ar=l=>l.map(a=>`<path d="${poly(a[1])}Z" fill="${a[0]}"/>`).join('');
 const dots=(s,w,c)=>pts(s).map(p=>`<rect x="${f1(p[0]-w/2)}" y="${f1(p[1]-w/2)}" width="${w}" height="${w}" fill="${c}"/>`).join('');
 let rd='';for(const k of ['ter','sec','prim','trunk','mw']){const v=STY[k];rd+=st(ROADS[k],v[0],v[1])+st(ROADS[k],v[2],v[3])}
 let piers='';for(const[s,x,y,n,dx,dy,len,r]of[['D',440,565,8,24,-9,15,-30],['D',235,660,4,32,-9,18,-18],['G',835,345,3,-6,36,13,-82],['G',795,455,4,-2,28,12,-88],['G',1130,20,3,18,-8,10,-35],['G',870,285,2,-14,20,8,-60]])for(let i=0;i<n;i++){const p=[SHEET[s][0]+(x+dx*i)/3,SHEET[s][1]+(y+dy*i)/3];piers+=`<rect x="${f1(p[0])}" y="${f1(p[1])}" width="3.800" height="${len}" fill="#f2efe9" transform="rotate(${r} ${f1(p[0])} ${f1(p[1])})"/>`}
 const at=(s,x,y)=>[SHEET[s][0]+x/3,SHEET[s][1]+y/3];
 const txt=TXT.map(([s,x,y,t,w,z,c,r,k])=>{const p=at(s,x,y);return`<text x="${f1(p[0])}" y="${f1(p[1])}" textLength="${w}" lengthAdjust="spacingAndGlyphs" font-size="${z}" fill="${c}" class="${k||''}" ${r?`transform="rotate(${r} ${f1(p[0])} ${f1(p[1]-3)})"`:''}>${t}</text>`}).join('');
 const sh=SHIELDS.map(([s,x,y,t,w,b,o,c,tw])=>{const p=at(s,x,y);return`<rect x="${f1(p[0]-w/2)}" y="${f1(p[1]-10.500)}" width="${w}" height="21" rx="2" fill="${b}" stroke="${o}" stroke-width="1.200"/><text class="p" x="${f1(p[0])}" y="${f1(p[1]+4.800)}" textLength="${tw}" lengthAdjust="spacingAndGlyphs" font-size="13" fill="${c}">${t}</text>`}).join('');
 this.attachShadow({mode:'open'}).innerHTML=`<style>
:host{display:block;position:relative;width:1538px;height:500px;overflow:hidden;font:15px/20px "Liberation Sans",sans-serif;color:#333}
svg.m{display:block}
.m text{font-family:"Noto Sans",sans-serif;text-anchor:middle;paint-order:stroke;stroke:#ffffffa0;stroke-width:2.4px;stroke-linejoin:round}
.m .i{font-style:italic}.m .n{font-style:italic;font-weight:500;stroke:#ffffffd0}.m .p{stroke:none;font-weight:500}
.zoom{position:absolute;left:12px;top:13px;border:2.500px solid #0003;border-radius:5px;background-clip:padding-box}
.zoom div{width:37.500px;height:37px;background:#fff;display:grid;place-items:center}
.zoom div:first-child{border-bottom:1px solid #ccc;border-radius:3px 3px 0 0}.zoom div:last-child{border-radius:0 0 3px 3px}
.zoom span{font:bold 28px/37px "Liberation Mono",monospace;color:#000;position:relative;top:2px;left:1px}
.pop{position:absolute;left:642px;top:82px;width:211px;height:56px;border-radius:15px;background:#fff;box-shadow:0 4px 17px #0006;text-align:center;line-height:57px;font-size:15px;white-space:nowrap}
.pop i{position:absolute;right:7px;top:4px;font:bold 20px/20px "Liberation Sans",sans-serif;color:#c3c3c3}
.tip{position:absolute;left:735px;top:138px;border:12px solid transparent;border-top:13px solid #fff;border-bottom:0}
.pin{position:absolute;left:731px;top:146px}
.cl{position:absolute;left:815px;top:263px;width:50px;height:50px;border-radius:50%;background:#f1d35799;display:grid;place-items:center}
.cl div{width:38px;height:38px;border-radius:50%;background:#efca38;text-align:center;font:15.500px/38px "Noto Sans",sans-serif;color:#2c3e50}
.at{position:absolute;right:0;bottom:0;width:220px;height:20px;box-sizing:border-box;padding-right:6px;background:#ffffffb8;text-align:right;font-size:14px;letter-spacing:-.08px;line-height:19px;white-space:nowrap}
.at a{color:#0078a8}
</style><svg class="m" width="1538" height="500" viewBox="339 339 1538 500"><defs>${g('g0',-27,12,8)}${g('g8',8,9,6)}${g('g3',-5,11,6)}${g('g30',-30,7,8)}${g('g12',11,13,9)}</defs>
<rect x="339" y="339" width="1538" height="500" fill="url(#g0)"/>${GRIDS.map(a=>`<path d="${poly(a[1])}Z" fill="url(#${a[0]})"/>`).join('')}${scat}${ar(AREAS)}${ar(LATE)}
${piers}<path d="${curve('D 480,775 600,720 740,685 840,670 845,700 800,720 H 700,0 600,100 520,180 430,245 380,225 250,215 180,180 300,110 400,50 480,0')}Z" fill="#add19e" stroke="#72bd86" stroke-width="3"/>${ar([['#c8d7ab','D 500,775 600,730 760,705 H 640,0 520,80'],['#cdebb0','H 340,90 430,50 475,175 410,210']])}
${st(['H 285,130 320,130','H 285,160 330,160','H 940,40 1070,35','H 950,65 1060,60','H 970,90 1040,80'],'#6f9fd0',1,'stroke-dasharray="7 4"')}
${st(CREEK,'#8a94bf',3)}${st(CREEK,'#aad3df',1.6)}${rd}
${st(BND,'#8e7ba3',2.2)}${st(BND2,'#b595b8',1.5,'stroke-dasharray="6 2 2 2"')}
${st(['A 10,660 370,440 590,310 790,150 1040,12'],'#b97f92',1,'stroke-dasharray="6 3"')}
${st(SUB,'#777',1.1,'stroke-linejoin="round"',poly)}${st(THICK,'#929292',2.300,'stroke-linejoin="round"',poly)}
${st(SIDING,'#a0a0a0',2.500)}${st(WIDE,'#747474',7)}${st(WIDE,'#c4c4c4',5,'stroke-dasharray="1 9"')}
${st(RAIL,'#6b6b6b',3.600)}${st(RAIL,'#d8d8d8',1,'stroke-dasharray="5 6"')}
${st(['G 0,270 290,320'],'#fff',7,'stroke-dasharray="4 5"')}${st(['G 0,268 210,300'],'#e892a2',9,'stroke-dasharray="17 4 5 3 4 3"')}${st(['G 248,265 240,320'],'#e892a2',7)}
${st(['G 590,415 570,590 725,615 710,635','G 640,590 600,640 580,670','G 700,520 720,620'],'#8dcf9b',4.500,'stroke-dasharray="9 2"',poly)}
${st(['C 930,765 1200,640','D 20,680 110,635','D 410,440 580,330'],'#6d6d52',1.500,'stroke-dasharray="4 3"')}
${st(['D 920,380 1090,270','G 985,500 950,590 975,610 960,747','G 920,150 950,165 1000,130','G 990,100 1050,70','H 870,430 870,470 1000,560 1070,565','G 795,650 945,705','E 720,515 750,480','F 600,745 640,735 690,745','F 1010,0 1050,90 1110,200'],'#5b5be0',1.200,'stroke-dasharray="2 3"')}
${st(['B 860,780 F 1000,130','D 350,500 100,650','G 690,340 750,340 785,280','G 690,355 750,355 775,430','G 600,405 1180,525'],'#7b3c56',.8)}
${dots(PITCH,7.500,'#88e0be')}${dots(STN,7,'#7981b5')}
<path d="M785.500 446l4.500 8h-9z" fill="#c98a3c"/>
<rect x="1371" y="770" width="25" height="21" rx="3" fill="#fff" opacity=".85"/>${sh}${txt}</svg>
<div class="at"><a>Leaflet</a> | © <a>OpenStreetMap</a>, <a>ODbL</a></div>
<div class="cl"><div>10</div></div>
<svg class="pin" width="56" height="51" viewBox="0 0 56 51"><defs><linearGradient id="pg" x1="0" y1="0" x2="0" y2="1"><stop stop-color="#2e6fa3"/><stop offset="1" stop-color="#1f82d2"/></linearGradient><filter id="bl"><feGaussianBlur stdDeviation="1.700"/></filter></defs><path d="M16 49L24 31Q29 20 36 22Q40 27 33 36Z" opacity=".28" filter="url(#bl)"/><path d="M15.500 49.500Q14 42 6 30Q.8 22 .8 15.500A14.700 14.700 0 0 1 30.200 15.500Q30.200 22 25 30Q17 42 15.500 49.500Z" fill="url(#pg)" stroke="#2467a0"/><circle cx="15.500" cy="15" r="5.300" fill="#fff"/></svg>
<div class="pop">Restaurant Name: NINE<i>×</i></div><div class="tip"></div>
<div class="zoom"><div><span>+</span></div><div><span>−</span></div></div>`}}
customElements.define('city-map',CityMap);

class ItemList extends HTMLElement{constructor(){super();this.attachShadow({mode:'open'}).innerHTML=`<style>:host{display:block;font-size:18.600px;line-height:26.720px}ul{margin:0;padding-left:50px}li{padding-left:var(--gap,0)}</style><ul>${this.getAttribute('items').split('|').map(t=>`<li>${t}</li>`).join('')}</ul>`}}
customElements.define('item-list',ItemList);
class PostalSelect extends HTMLElement{constructor(){super();this.attachShadow({mode:'open'}).innerHTML=`<style>:host{display:block}b{display:block;height:33px}.s{height:43px;box-sizing:border-box;border:1.25px solid #ccc;border-radius:5px;display:flex;align-items:center;justify-content:space-between;padding:1px 21px 0 15px;color:#333}i{border:6.300px solid transparent;border-top:6.300px solid #333;border-bottom:0;margin-top:-3px}</style><b><slot></slot></b><div class="s"><span>${this.getAttribute('value')}</span><i></i></div>`}}
customElements.define('postal-select',PostalSelect);

class GreenEatsPage extends HTMLElement{constructor(){super();this.attachShadow({mode:'open'}).innerHTML=`<style>
:host{display:block;padding:0 19px;font:18.75px/26.79px Lato,"Noto Sans",sans-serif;color:#2c3e50}
h2{font-weight:400;font-size:40px;font-variant-ligatures:none;letter-spacing:-.12px;line-height:44px;margin:0;padding:26px 0 13px;white-space:nowrap}
.well{height:143px;box-sizing:border-box;background:#ecf0f1;border-radius:5px;padding:25px 24px;font-size:18.610px}
.row{display:flex;gap:38px;margin-top:25px}
aside{width:277px;flex:none}
.panel{margin-top:25px;height:534px;box-sizing:border-box;background:#e5e3e1;border-radius:6px;box-shadow:0 0 12px #0000001c;padding:12.500px;padding-top:13px}
.panel item-list{margin-top:13.400px;margin-left:-1px;--gap:7px}
h4{margin:0;font-size:22.500px;line-height:25px;padding:3px 0 4px;font-weight:700;color:#333}
.g{color:#008000;margin-top:14px;margin-bottom:.5px;font-size:20px}
</style><h2>GreenEats: Navigating Top Vegan &amp; Veggie Cuisine</h2>
<div class="well">Welcome to our Yelp Review Analysis app!<br>We've got your back if you're a vegetarian or vegan in Philadelphia. Use our map to explore the top-rated plant-based restaurants in your area.<br>Pick a postal code, click a marker, and discover restaurant details and popular dishes.</div>
<div class="row"><aside><postal-select value="19130">Select Postal Code</postal-select>
<div class="panel"><b>Popular items in the selected area from the reviews:</b><item-list items="potato salad|home fries|udon noodle salad|beet salad|vegpizza|chocolate chip cookie|spinach salad|brussel sprouts|curry tofu wrap|dessert|meat substitutes|cake|coffee|spring roll|Caesar salad|burrito"></item-list></div></aside>
<main><city-map></city-map><h4>Details for the selected business:</h4><div><b>Restaurant Name:</b> NINE</div><div><b>Rating on Yelp:</b> 4.5</div><div><b>Number of Reviews:</b> 91</div><div class="g">Popular Items from reviews:</div><item-list items="waffle|hash browns|appetizer|milkshake|jam"></item-list></main></div>`}}
customElements.define('greeneats-page',GreenEatsPage);
</script></body></html>
